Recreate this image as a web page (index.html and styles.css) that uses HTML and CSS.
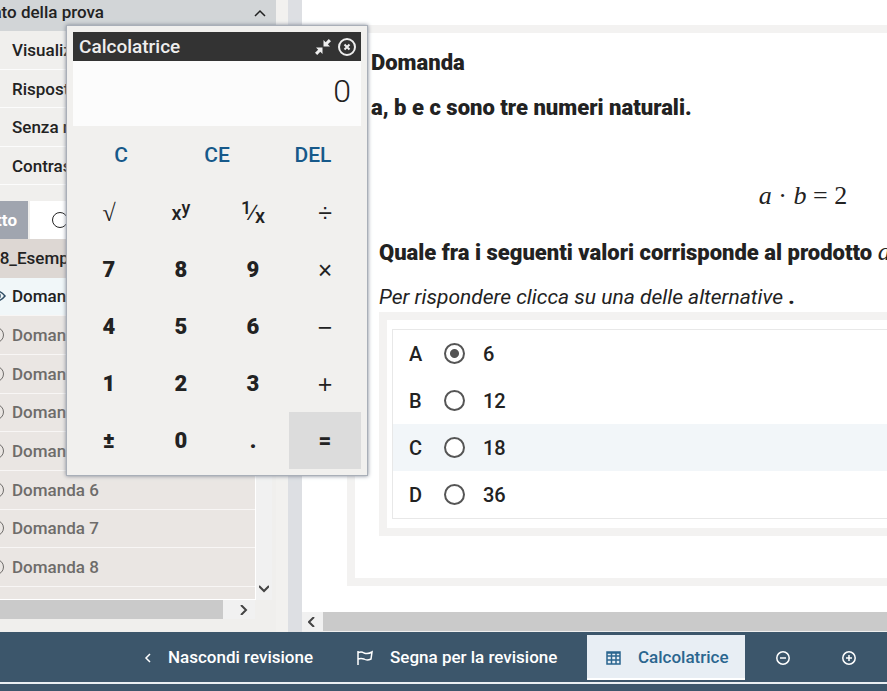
FILE: index.html
```
<!DOCTYPE html>
<html lang="it">

<head>
    <meta charset="utf-8">
    <meta name="viewport" content="width=device-width, initial-scale=1.0">
    <title>Domanda 1</title>
    <link rel="stylesheet" href="styles.css">
</head>

<body>
    <main>
        <aside>
            <button class="stato">
                <span>Stato della prova</span>
                <svg width="12" height="8" viewBox="0 0 12 8"><path d="M1 7l5-5 5 5" /></svg>
            </button>
            <ul class="filtri">
                <li><a href="#">Visualizzate</a></li>
                <li><a href="#">Risposte</a></li>
                <li><a href="#">Senza risposta</a></li>
                <li><a href="#">Contrassegnate</a></li>
            </ul>
            <div class="tabs">
                <button class="tab valgt"><span>Tutto</span></button>
                <button class="tab" aria-label="Senza risposta"><i class="cerchio"></i></button>
            </div>
            <div class="elenco">
                <div class="lista">
                    <h2><span>08_Esempio</span></h2>
                    <a href="#" class="attiva"><svg class="occhio" width="18" height="12" viewBox="0 0 18 12"><path d="M1 6q8-10 16 0q-8 10-16 0z" /><circle cx="9" cy="6" r="3" /></svg>Domanda 1</a>
                    <a href="#"><i class="cerchio"></i>Domanda 2</a>
                    <a href="#"><i class="cerchio"></i>Domanda 3</a>
                    <a href="#"><i class="cerchio"></i>Domanda 4</a>
                    <a href="#"><i class="cerchio"></i>Domanda 5</a>
                    <a href="#"><i class="cerchio"></i>Domanda 6</a>
                    <a href="#"><i class="cerchio"></i>Domanda 7</a>
                    <a href="#"><i class="cerchio"></i>Domanda 8</a>
                </div>
                <div class="scroll-v">
                    <svg width="10" height="8" viewBox="0 0 10 8"><path d="M0 1l5 5 5-5" /></svg>
                </div>
                <div class="scroll-h">
                    <div class="thumb"></div>
                    <svg width="8" height="10" viewBox="0 0 8 10"><path d="M1 0l5 5-5 5" /></svg>
                </div>
            </div>
        </aside>
        <div class="divisore"></div>
        <section class="contenuto">
            <div class="pagina">
                <article>
                    <h1>Domanda</h1>
                    <p class="testo">a, b e c sono tre numeri naturali.</p>
                    <p class="formula"><i>a</i> · <i>b</i> = 2</p>
                    <div class="quesito">
                        <p class="testo">Quale fra i seguenti valori corrisponde al prodotto <i class="mat">a</i></p>
                        <p class="aiuto"><em>Per rispondere clicca su una delle alternative</em> <b>.</b></p>
                        <div class="riquadro">
                            <div class="risposte">
                                <label><span>A</span><input type="radio" name="risposta" checked>6</label>
                                <label><span>B</span><input type="radio" name="risposta">12</label>
                                <label class="hover"><span>C</span><input type="radio" name="risposta">18</label>
                                <label><span>D</span><input type="radio" name="risposta">36</label>
                            </div>
                        </div>
                    </div>
                </article>
            </div>
            <div class="scroll-pagina">
                <div class="freccia"><svg width="8" height="10" viewBox="0 0 8 10"><path d="M6 0l-5 5 5 5" /></svg></div>
                <div class="thumb"></div>
            </div>
        </section>
    </main>

    <footer>
        <nav>
            <button class="nascondi"><svg width="8" height="12" viewBox="0 0 8 12"><path d="M6 2l-4 4 4 4" /></svg>Nascondi revisione</button>
            <button class="segna"><svg width="16" height="16" viewBox="0 0 16 16"><path d="M1 1v14M1 3q3-2 6 0q4 1.500 8-1l-1 7q-4 2-7 0q-3-1-6 0" /></svg>Segna per la revisione</button>
            <button class="calc"><svg width="15" height="14" viewBox="0 0 15 14"><path d="M1 1h13v12h-13zM1 2h13M1 5h13M1 9h13M5.500 1v12M10 1v12" /></svg>Calcolatrice</button>
            <button class="zoom" aria-label="Riduci"><svg width="16" height="16" viewBox="0 0 16 16"><circle cx="8" cy="8" r="6.200" /><path d="M5 8h6" /></svg></button>
            <button class="zoom" aria-label="Ingrandisci"><svg width="16" height="16" viewBox="0 0 16 16"><circle cx="8" cy="8" r="6.200" /><path d="M5 8h6M8 5v6" /></svg></button>
        </nav>
    </footer>

    <div class="calcolatrice">
        <header>
            <h2>Calcolatrice</h2>
            <button aria-label="Riduci"><svg width="16" height="16" viewBox="0 0 16 16"><path class="pieno" d="M8.500 1v6.500H15l-2.200-2.200L16 2.200 13.800 0 10.700 3.200zM7.500 15v-6.500H1l2.200 2.200L0 13.800 2.200 16l3.100-3.200z" /></svg></button>
            <button aria-label="Chiudi"><svg width="20" height="20" viewBox="0 0 20 20"><circle cx="10" cy="10" r="8" /><path class="croce" d="M7.500 7.500l5 5M12.500 7.500l-5 5" /></svg></button>
        </header>
        <output>0</output>
        <div class="comandi">
            <button>C</button>
            <button>CE</button>
            <button>DEL</button>
        </div>
        <div class="tasti">
            <button class="radice">√</button>
            <button class="frazione">x<sup>y</sup></button>
            <button class="frazione"><sup>1</sup><span>∕</span><sub>x</sub></button>
            <button class="op">÷</button>
            <button>7</button>
            <button>8</button>
            <button>9</button>
            <button class="op">×</button>
            <button>4</button>
            <button>5</button>
            <button>6</button>
            <button class="op">−</button>
            <button>1</button>
            <button>2</button>
            <button>3</button>
            <button class="op">+</button>
            <button>±</button>
            <button>0</button>
            <button>.</button>
            <button class="uguale">=</button>
        </div>
    </div>
</body>

</html>
```
FILE: styles.css
```
* {
    box-sizing: border-box;
}

body {
    margin: 0;
    height: 100vh;
    overflow: hidden;
    display: flex;
    flex-direction: column;
    font-family: Roboto, "Liberation Sans", sans-serif;
    font-size: 17px;
    font-weight: 500;
    line-height: 20px;
    color: #222;
    background-color: #fff;
}

h1,
h2,
p,
ul {
    margin: 0;
    padding: 0;
}

ul {
    list-style: none;
}

a {
    color: inherit;
    text-decoration: none;
}

button {
    font: inherit;
    color: inherit;
    background: none;
    border: none;
    padding: 0;
    cursor: pointer;
}

svg {
    display: block;
    flex: none;
    fill: none;
    stroke: currentColor;
    stroke-width: 2;
}

main {
    flex: 1;
    min-height: 0;
    display: flex;
}

/* colonna sinistra */

aside {
    width: 276px;
    flex: none;
    display: flex;
    flex-direction: column;
    background-color: #f0efed;
    padding-bottom: 13px;
    overflow: hidden;
}

.stato {
    height: 31px;
    flex: none;
    display: flex;
    justify-content: space-between;
    align-items: center;
    padding: 0 10px 8px 0;
    background-color: #d2d5d7;
}

.stato span {
    width: 104px;
    display: flex;
    justify-content: flex-end;
    white-space: nowrap;
}

.stato svg {
    margin-top: 2px;
    stroke-width: 1.500;
}

.filtri a {
    display: flex;
    align-items: center;
    height: 38px;
    box-sizing: content-box;
    padding-left: 12px;
    border-bottom: 1px solid #fcfcfc;
}

.filtri li:nth-child(even) a {
    height: 37px;
}

.tabs {
    display: flex;
    gap: 2px;
    margin-top: 16px;
    width: 255px;
}

.tab {
    height: 38px;
    flex: 1;
    padding-left: 22px;
    background-color: #fff;
}

.tab.valgt {
    flex: none;
    width: 28px;
    padding: 0 11px 0 0;
    display: flex;
    align-items: center;
    justify-content: flex-end;
    color: #fff;
    background-color: #a0a5af;
    font-weight: 700;
}

.cerchio {
    display: block;
    width: 16px;
    height: 16px;
    border: 1px solid currentColor;
    border-radius: 50%;
}

.elenco {
    flex: 1;
    min-height: 0;
    display: grid;
    grid-template-columns: 255px 17px;
    grid-template-rows: 1fr 19px;
}

.lista {
    display: grid;
    grid-template-rows: repeat(9, 1fr);
    padding-bottom: 12px;
    background-color: #eae6e3;
    border-bottom: 1px solid #fff;
    overflow: hidden;
}

.lista h2 {
    display: flex;
    align-items: center;
    font-size: 17px;
    font-weight: 500;
    margin-left: -10px;
    background-color: #ddd7d3;
}

.lista a {
    display: flex;
    align-items: center;
    gap: 8px;
    margin-left: -12px;
    color: #6e6c6a;
    border-bottom: 1px solid #f8f6f5;
}

.lista .attiva {
    gap: 6px;
    color: #222;
    background-color: #f1f7f9;
}

.occhio {
    stroke: #2c4a62;
    stroke-width: 1.500;
}

.scroll-v {
    background-color: #f1f1f1;
    border-left: 1px solid #fff;
    display: flex;
    align-items: flex-end;
    justify-content: center;
    padding-bottom: 7px;
    color: #444;
}

.scroll-h {
    display: flex;
    justify-content: space-between;
    align-items: center;
    padding-right: 7px;
    background-color: #f1f1f1;
    color: #444;
}

.scroll-h .thumb {
    width: 223px;
    height: 100%;
    background-color: #cacaca;
}

.divisore {
    width: 26px;
    flex: none;
    border-left: 12px solid #f2f1ef;
    background-color: #dddfe3;
}

/* pagina con la domanda */

.contenuto {
    flex: 1;
    min-width: 0;
    display: flex;
    flex-direction: column;
}

.pagina {
    flex: 1;
    min-height: 0;
    overflow: hidden;
    padding: 25px 0 26px 45px;
}

article {
    min-width: 912px;
    height: 100%;
    border: 8px solid #f3f2f1;
    padding: 18px 16px;
    font-size: 20px;
    line-height: 24px;
}

h1,
.testo {
    font-size: 22px;
    font-weight: 900;
    line-height: 24px;
}

h1 {
    margin-bottom: 21px;
}

.formula,
.mat {
    font-family: "Liberation Serif", serif;
    font-size: 26px;
    font-weight: 400;
    line-height: 28px;
}

.formula {
    text-align: center;
    margin: 62px 0 31px;
}

.mat {
    line-height: 20px;
}

.quesito {
    padding: 0 8px;
}

.aiuto {
    margin: 20px 0 3px;
    font-size: 21px;
    font-weight: 400;
}

.aiuto b {
    font-weight: 900;
}

.riquadro {
    border: 8px solid #f3f2f1;
    padding: 9px 5px;
}

.risposte {
    border: 1px solid #e8e8e8;
}

.risposte label {
    display: flex;
    align-items: center;
    height: 47px;
    padding-left: 16px;
}

.risposte span {
    width: 35px;
}

.risposte .hover {
    background-color: #f2f6f9;
}

.risposte input {
    appearance: none;
    width: 21px;
    height: 21px;
    margin: 0 18px 0 0;
    border: 2px solid #555;
    border-radius: 50%;
    background-color: #fff;
}

.risposte input:checked {
    background-image: radial-gradient(#555 0 4px, #fff 5px);
}

.scroll-pagina {
    height: 20px;
    display: flex;
    background-color: #cacaca;
    border-bottom: 1px solid #eee;
}

.freccia {
    width: 21px;
    display: flex;
    align-items: center;
    justify-content: center;
    padding-right: 2px;
    background-color: #f1f1f1;
    color: #444;
}

/* barra in basso */

footer {
    flex: none;
    background-color: #3c566b;
    color: #fff;
    padding-bottom: 7px;
}

nav {
    display: flex;
    height: 52px;
    padding: 3px 0 2px 144px;
    border-bottom: 2px solid #e9eef2;
}

nav button {
    display: flex;
    align-items: center;
    height: 45px;
    padding-bottom: 2px;
    white-space: nowrap;
}

nav svg {
    margin-top: 2px;
    stroke-width: 1.500;
}

.nascondi {
    width: 213px;
    gap: 16px;
}

.segna {
    width: 230px;
    gap: 17px;
}

.calc {
    width: 158px;
    padding: 0 0 0 19px;
    gap: 17px;
    color: #2b668f;
    background-color: #e8eef4;
    border-bottom: 2px solid #fff;
}

.zoom {
    width: 66px;
    padding-left: 30px;
}

/* calcolatrice sopra la pagina */

.calcolatrice {
    position: absolute;
    left: 66px;
    top: 25px;
    width: 302px;
    padding: 6px;
    border: 1px solid #a9afb8;
    background-color: #f1f0ee;
    box-shadow: 0 0 4px #7d8593;
}

.calcolatrice header {
    display: flex;
    align-items: center;
    height: 29px;
    padding: 0 4px 0 6px;
    color: #eee;
    background-color: #333;
}

.calcolatrice h2 {
    flex: 1;
    font-size: 19px;
    font-weight: 500;
}

.calcolatrice header button {
    margin-left: 6px;
}

.calcolatrice header .pieno {
    fill: currentColor;
    stroke: none;
}

output {
    display: block;
    height: 65px;
    padding: 13px 10px 0;
    font-size: 32px;
    font-weight: 300;
    line-height: 34px;
    text-align: right;
    background-color: #fcfcfc;
}

.comandi {
    display: grid;
    grid-template-columns: repeat(3, 1fr);
    grid-auto-rows: 58px;
    color: #17598a;
    font-size: 21px;
}

.tasti {
    display: grid;
    grid-template-columns: repeat(4, 1fr);
    grid-auto-rows: 57px;
    font-size: 22px;
    font-weight: 900;
}

.tasti .op {
    font-family: "Liberation Sans", Arial, sans-serif;
    font-size: 25px;
    font-weight: 400;
}

.tasti .radice {
    font-family: "Liberation Serif", serif;
    font-size: 24px;
    font-weight: 400;
}

.tasti .frazione {
    font-size: 20px;
    font-weight: 500;
}

.frazione span {
    font-size: 22px;
    font-weight: 400;
}

.frazione sup,
.frazione sub {
    font-size: 18px;
    line-height: 0;
}

.frazione sup {
    vertical-align: 6px;
}

.frazione sub {
    font-size: 20px;
    vertical-align: -3px;
}

.uguale {
    background-color: #dcdcdc;
}
```
